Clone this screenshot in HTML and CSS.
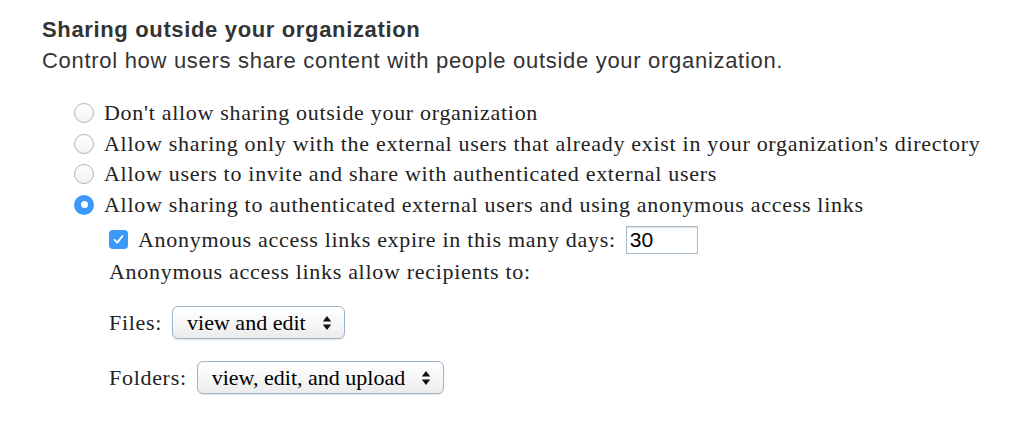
FILE: index.html
```html
<!DOCTYPE html>
<html>
<head>
<meta charset="utf-8">
<link rel="stylesheet" href="styles.css">
</head>
<body>
<div class="page">
  <h1 class="title">Sharing outside your organization</h1>
  <p class="subtitle">Control how users share content with people outside your organization.</p>
  <div class="options">
    <div class="row"><span class="radio"></span><span class="label">Don't allow sharing outside your organization</span></div>
    <div class="row"><span class="radio"></span><span class="label">Allow sharing only with the external users that already exist in your organization's directory</span></div>
    <div class="row"><span class="radio"></span><span class="label">Allow users to invite and share with authenticated external users</span></div>
    <div class="row"><span class="radio on"></span><span class="label">Allow sharing to authenticated external users and using anonymous access links</span></div>
    <div class="sub">
      <div class="row check-row">
        <span class="checkbox"><svg width="13" height="13" viewBox="0 0 12 12"><path d="M2.4 6.4 L4.9 8.9 L9.6 2.9" fill="none" stroke="#fff" stroke-width="1.7" stroke-linecap="round" stroke-linejoin="round"/></svg></span>
        <span class="label">Anonymous access links expire in this many days:</span>
        <span class="textbox">30</span>
      </div>
      <div class="row plain">Anonymous access links allow recipients to:</div>
      <div class="row sel-row files"><span class="label">Files:</span><span class="select">view and edit<span class="arrows"><svg width="10" height="16" viewBox="0 0 10 16"><path d="M5 1 L9.2 6.6 L0.8 6.6 Z M0.8 9.4 L9.2 9.4 L5 15 Z" fill="#111"/></svg></span></span></div>
      <div class="row sel-row folders"><span class="label">Folders:</span><span class="select">view, edit, and upload<span class="arrows"><svg width="10" height="16" viewBox="0 0 10 16"><path d="M5 1 L9.2 6.6 L0.8 6.6 Z M0.8 9.4 L9.2 9.4 L5 15 Z" fill="#111"/></svg></span></span></div>
    </div>
  </div>
</div>
</body>
</html>
```
FILE: styles.css
```css
html, body { margin: 0; padding: 0; background: #fff; }
.page { padding: 17px 0 0 42px; }
.title {
  margin: 0;
  font-family: "Liberation Sans", Arial, sans-serif;
  font-weight: bold;
  font-size: 22px;
  letter-spacing: 0.65px;
  line-height: 26px;
  color: #333;
}
.subtitle {
  margin: 5px 0 0;
  font-family: "Liberation Sans", Arial, sans-serif;
  font-size: 22px;
  letter-spacing: 0.7px;
  line-height: 26px;
  color: #333;
}
.options {
  margin-top: 24px;
  padding-left: 32px;
  font-family: "Liberation Serif", "Times New Roman", serif;
  font-size: 22px;
  letter-spacing: 0.7px;
  color: #222;
}
.row { display: flex; align-items: center; height: 30.5px; white-space: nowrap; }
.radio {
  width: 20px; height: 20px;
  border-radius: 50%;
  border: 1px solid #b3b3b3;
  background: linear-gradient(#fff, #f2f2f2);
  box-sizing: border-box;
  margin-right: 10px;
  flex: none;
  position: relative;
}
.radio.on {
  border: none;
  background: #3b99fc;
}
.radio.on::after {
  content: "";
  position: absolute;
  left: 6.5px; top: 6.5px;
  width: 7px; height: 7px;
  border-radius: 50%;
  background: #fff;
}
.sub { padding-left: 35px; }
.check-row { height: 39.5px; }
.checkbox {
  width: 19px; height: 19px;
  border-radius: 4px;
  background: #3b99fc;
  display: flex; align-items: center; justify-content: center;
  margin-right: 10px;
  flex: none;
}
.textbox {
  margin-left: 10px;
  width: 72px; height: 28px;
  box-sizing: border-box;
  border: 1px solid #a9bccf;
  box-shadow: inset 0 1px 1px rgba(0,0,0,0.12);
  font-family: "Liberation Sans", Arial, sans-serif;
  font-size: 21px;
  letter-spacing: 0;
  padding: 1px 3px;
  line-height: 24px;
  color: #000;
}
.plain { height: 24.5px; }
.sel-row { height: 40px; }
.files { margin-top: 18.75px; }
.folders { margin-top: 15px; }
.sel-row .label { margin-right: 10px; }
.select {
  display: flex; align-items: center;
  height: 33px;
  box-sizing: border-box;
  padding: 0 12px 0 14px;
  border: 1px solid #9fb4c7;
  border-radius: 6px;
  background: linear-gradient(#ffffff, #f6f6f6 55%, #ebebeb);
  box-shadow: 0 1px 1px rgba(0,0,0,0.12);
  color: #000;
  letter-spacing: 0;
}
.arrows { margin-left: 16px; display: flex; }
```
